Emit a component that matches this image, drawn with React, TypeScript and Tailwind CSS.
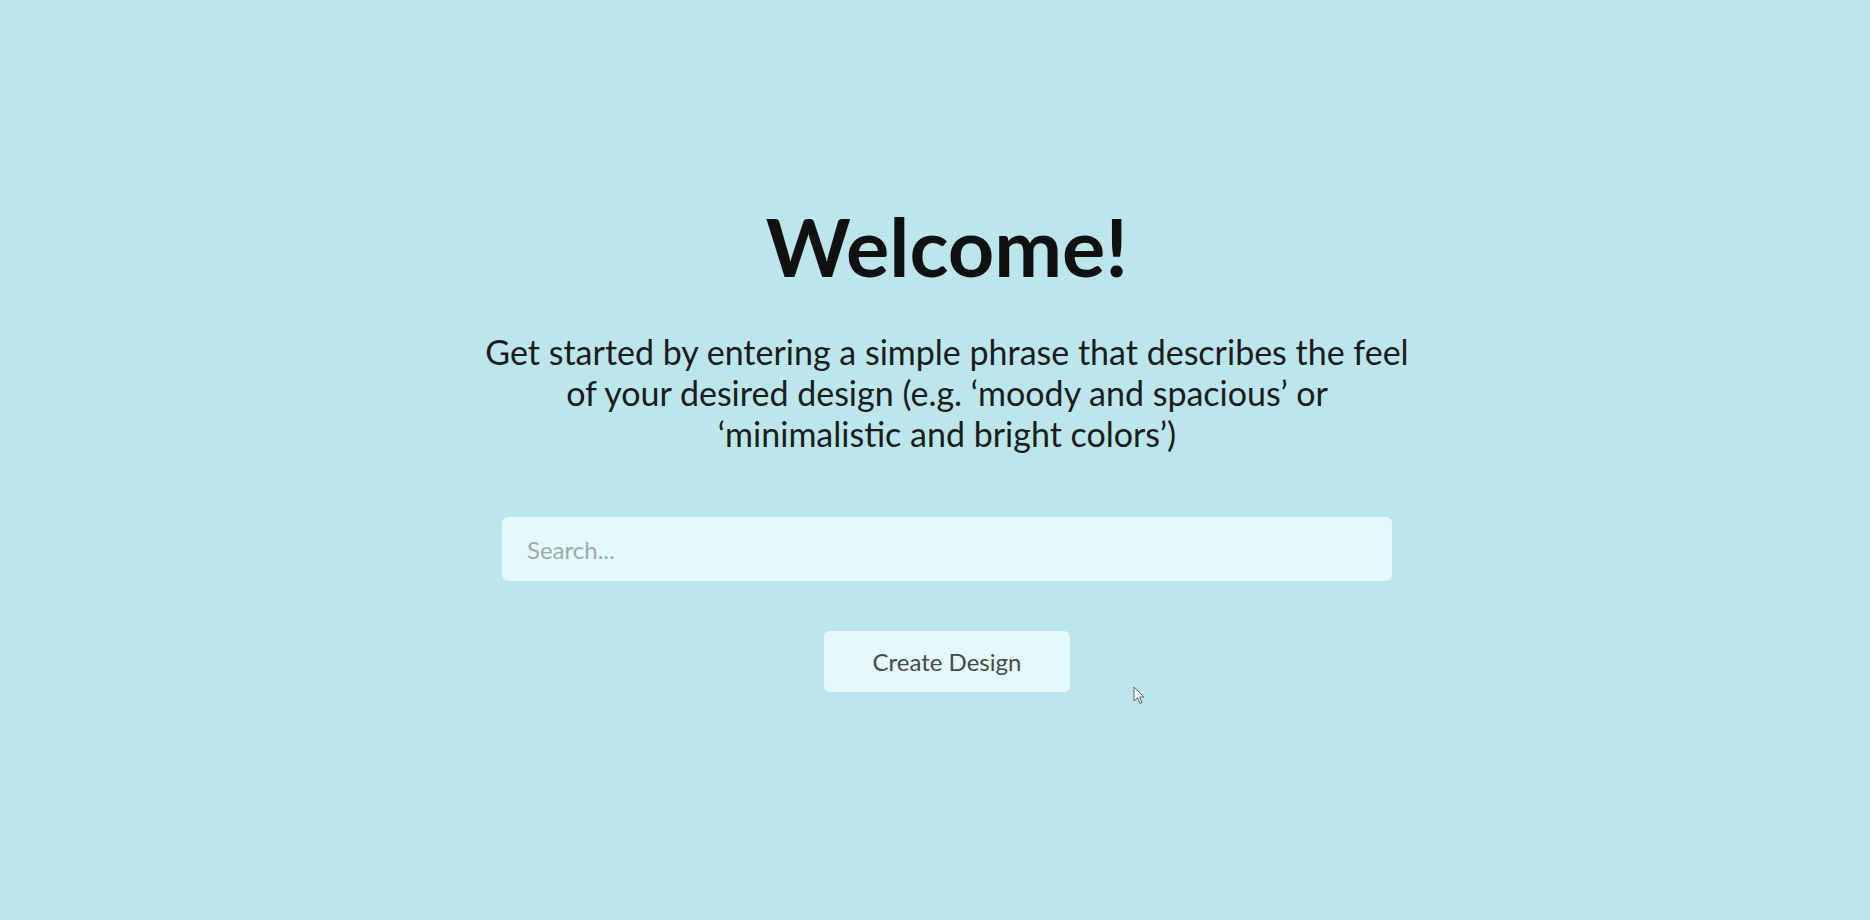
import React from "react";

export default function App() {
  return (
    <div
      className="relative w-full h-[920px] bg-[#bbe6eb] overflow-hidden"
      style={{ fontFamily: "Lato, 'Noto Sans', sans-serif" }}
    >
      <div className="flex flex-col items-center pt-[196px] pl-[24px]">
        <h1 className="text-[81px] leading-[100px] font-bold text-[#111111]">Welcome!</h1>
        <p className="mt-[35px] w-[940px] text-center text-[34px] leading-[41px] text-[#1c1c1c]">
          Get started by entering a simple phrase that describes the feel of your desired design (e.g. ‘moody and spacious’ or ‘minimalistic and bright colors’)
        </p>
        <input
          type="text"
          placeholder="Search..."
          className="mt-[63px] w-[890px] h-[64px] rounded-[6px] bg-[#e4f9fc] px-[25px] text-[24px] text-[#333] placeholder:text-[#a0a9aa] outline-none"
        />
        <button className="mt-[50px] w-[246px] h-[61px] rounded-[6px] bg-[#e4f9fc] text-[24px] text-[#454a4b]">
          Create Design
        </button>
      </div>
      <svg
        className="absolute left-[1133px] top-[686px]"
        width="12"
        height="19"
        viewBox="0 0 12 19"
      >
        <path d="M1 1 L1 15 L4.5 11.8 L7 17.5 L9 16.6 L6.6 11 L11 11 Z" fill="#f4fbfc" stroke="#5a6466" strokeWidth="1" strokeLinejoin="round" />
      </svg>
    </div>
  );
}
